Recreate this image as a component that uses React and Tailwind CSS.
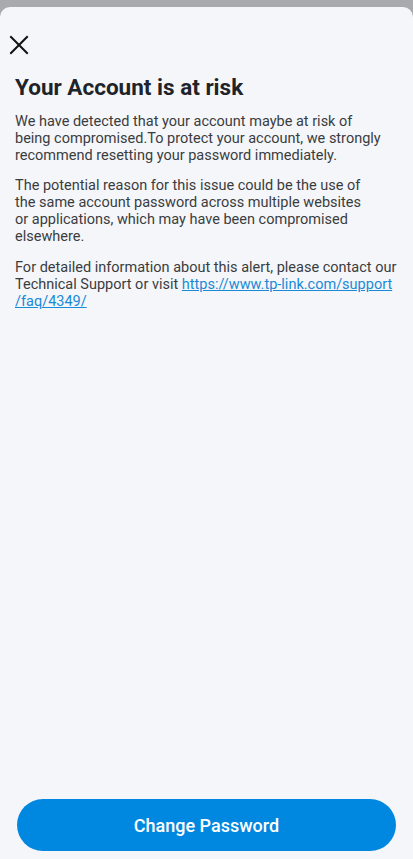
import React from "react";

const AccountRisk = () => {
  return (
    <div className="h-screen bg-[#a9aaae] pt-[7px] flex flex-col" style={{ fontFamily: "Roboto, 'Noto Sans', sans-serif" }}>
      <div className="flex-1 bg-[#f5f6fa] rounded-t-[10px] flex flex-col">
        <div className="pl-[8px] pt-[27px]">
          <svg width="22" height="22" viewBox="0 0 22 22" fill="none" stroke="#111" strokeWidth="2" strokeLinecap="square">
            <path d="M3 3L19 19M19 3L3 19" />
          </svg>
        </div>
        <div className="px-[15px] flex-1">
          <h1 className="mt-[16px] text-[22.5px] font-bold text-[#1e2429] leading-[30px] whitespace-nowrap">
            Your Account is at risk
          </h1>
          <div className="mt-[11px] text-[14.5px] leading-[17px] text-[#3a3d40] whitespace-nowrap">
            <p>
              We have detected that your account maybe at risk of
              <br />
              being compromised.To protect your account, we strongly
              <br />
              recommend resetting your password immediately.
            </p>
            <p className="mt-[13px]">
              The potential reason for this issue could be the use of
              <br />
              the same account password across multiple websites
              <br />
              or applications, which may have been compromised
              <br />
              elsewhere.
            </p>
            <p className="mt-[14px]">
              For detailed information about this alert, please contact our
              <br />
              Technical Support or visit{" "}
              <a href="#" className="text-[#1a8ad6] underline">
                https://www.tp-link.com/support
                <br />
                /faq/4349/
              </a>
            </p>
          </div>
        </div>
        <div className="px-[17px] pb-[8px]">
          <button className="w-full h-[52px] rounded-full bg-[#0088e1] text-white text-[18px] font-medium">
            Change Password
          </button>
        </div>
      </div>
    </div>
  );
};

export default function App() {
  return <AccountRisk />;
}
